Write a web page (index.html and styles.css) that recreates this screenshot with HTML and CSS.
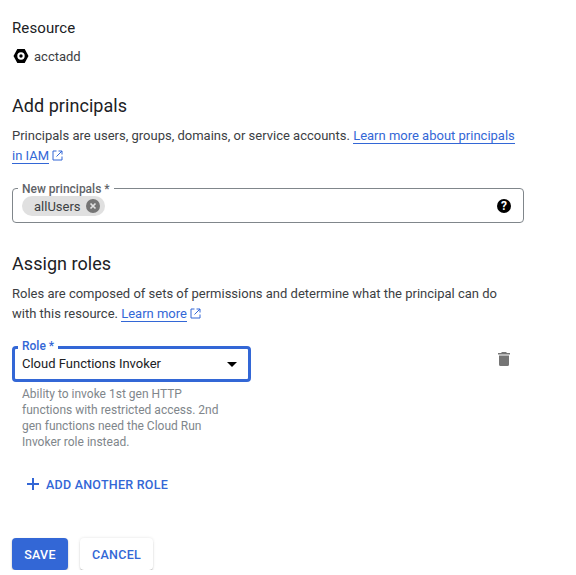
FILE: index.html
```html
<!DOCTYPE html>
<html lang="en">
<head>
    <meta charset="UTF-8">
    <title>Add principals</title>
    <link rel="stylesheet" href="styles.css">
</head>
<body>

<div class="container">
    <h3 class="resource-title">Resource</h3>
    <div class="resource">
        <svg class="resource-icon" width="16" height="16" viewBox="0 0 16 16">
            <path fill-rule="evenodd" d="M4.300 1h7.400L15.500 8l-3.800 7H4.300L0.500 8z M8 4.300a3.700 3.700 0 1 0 0 7.400a3.700 3.700 0 0 0 0-7.400z M8 6.300a1.700 1.700 0 1 1 0 3.400a1.700 1.700 0 0 1 0-3.400z" fill="#000"/>
        </svg>
        <span>acctadd</span>
    </div>

    <h2 class="section-title principals-title">Add principals</h2>
    <p class="desc">Principals are users, groups, domains, or service accounts. <a class="link">Learn more about principals in IAM</a><svg class="ext" width="11" height="11" viewBox="0 0 11 11"><path d="M4.500 1H1v9h9V6.500 M6.500 1H10v3.500 M10 1L4.500 6.500" fill="none" stroke="#3367d6" stroke-width="1"/></svg></p>

    <div class="field principals-field">
        <span class="field-label">New principals *</span>
        <div class="chip">
            <span>allUsers</span>
            <svg width="14" height="14" viewBox="0 0 14 14">
                <circle cx="7" cy="7" r="7" fill="#757575"/>
                <path d="M4.500 4.500l5 5M9.500 4.500l-5 5" stroke="#e0e0e0" stroke-width="1.700"/>
            </svg>
        </div>
        <svg class="help" width="16" height="16" viewBox="0 0 16 16">
            <circle cx="8" cy="8" r="7" fill="#000"/>
            <text x="8" y="12" text-anchor="middle" class="help-mark">?</text>
        </svg>
    </div>

    <h2 class="section-title roles-title">Assign roles</h2>
    <p class="desc">Roles are composed of sets of permissions and determine what the principal can do with this resource. <a class="link">Learn more</a><svg class="ext" width="11" height="11" viewBox="0 0 11 11"><path d="M4.500 1H1v9h9V6.500 M6.500 1H10v3.500 M10 1L4.500 6.500" fill="none" stroke="#3367d6" stroke-width="1"/></svg></p>

    <div class="role-row">
        <div class="role-col">
            <div class="field role-field">
                <span class="field-label role-label">Role *</span>
                <span>Cloud Functions Invoker</span>
                <span class="arrow"></span>
            </div>
            <p class="hint">Ability to invoke 1st gen HTTP functions with restricted access. 2nd gen functions need the Cloud Run Invoker role instead.</p>
        </div>
        <svg class="trash" width="12" height="14" viewBox="0 0 12 14">
            <path d="M4 0h4l1 1h3v1.500H0V1h3z M1 3.500h10v9A1.500 1.500 0 0 1 9.500 14h-7A1.500 1.500 0 0 1 1 12.500z" fill="#757575"/>
        </svg>
    </div>

    <a class="add-role">
        <svg width="14" height="14" viewBox="0 0 14 14"><path d="M7 1v12M1 7h12" stroke="#3367d6" stroke-width="2"/></svg>
        <span>ADD ANOTHER ROLE</span>
    </a>

    <div class="actions">
        <button class="btn-save">SAVE</button>
        <button class="btn-cancel">CANCEL</button>
    </div>
</div>

</body>
</html>
```

FILE: styles.css
```css
body {
    margin: 0;
    font-family: Roboto, sans-serif;
    background-color: #ffffff;
    color: #202124;
}
.container {
    width: 512px;
    padding: 20px 0 0 12px;
}
.resource-title {
    margin: 0;
    font-size: 15px;
    line-height: 16px;
    font-weight: 400;
    letter-spacing: 0.1px;
    color: #202124;
}
.resource {
    display: flex;
    align-items: center;
    gap: 5px;
    margin-top: 12px;
    margin-left: 1px;
    height: 16px;
    font-size: 13px;
    color: #3c4043;
}
.section-title {
    margin: 0;
    font-size: 18px;
    line-height: 24px;
    font-weight: 400;
    letter-spacing: 0.05px;
    color: #202124;
}
.principals-title {
    margin-top: 30px;
}
.roles-title {
    margin-top: 29px;
}
.desc {
    margin: 8px 0 0;
    font-size: 13px;
    line-height: 20px;
    color: #3c4043;
}
.link {
    color: #3367d6;
    border-bottom: 1px solid #3367d6;
}
.ext {
    margin-left: 3px;
    vertical-align: -1px;
}
.field {
    position: relative;
    display: flex;
    align-items: center;
    box-sizing: border-box;
    border: 1px solid #80868b;
    border-radius: 4px;
}
.field-label {
    position: absolute;
    left: 5px;
    top: -7px;
    padding: 0 4px;
    background-color: #ffffff;
    font-size: 12px;
    line-height: 14px;
    font-weight: 500;
    color: #5f6368;
}
.principals-field {
    height: 35px;
    margin-top: 22px;
    padding: 0 11px 0 9px;
    justify-content: space-between;
}
.chip {
    display: flex;
    align-items: center;
    gap: 5px;
    height: 20px;
    margin-top: 1px;
    padding: 0 5px 0 12px;
    border-radius: 10px;
    background-color: #e0e0e0;
    font-size: 13px;
    color: #3c4043;
}
.help-mark {
    font-family: Roboto, sans-serif;
    font-size: 12px;
    font-weight: 700;
    fill: #ffffff;
}
.role-row {
    display: flex;
    justify-content: space-between;
    margin-top: 22px;
}
.role-col {
    width: 239px;
}
.role-field {
    height: 36px;
    padding: 0 11px 2px 7px;
    justify-content: space-between;
    border: 3px solid #3367d6;
    font-size: 13px;
    color: #202124;
}
.role-label {
    left: 3px;
    top: -10px;
    color: #3367d6;
}
.arrow {
    width: 0;
    height: 0;
    margin-top: 2px;
    border-left: 5px solid transparent;
    border-right: 5px solid transparent;
    border-top: 5px solid #000000;
}
.hint {
    width: 205px;
    margin: 4px 0 0 10px;
    font-size: 12px;
    line-height: 16px;
    color: #80868b;
}
.trash {
    margin: 6px 14px 0 0;
}
.add-role {
    display: flex;
    align-items: center;
    gap: 6px;
    margin: 26px 0 0 14px;
    height: 16px;
    font-size: 12.500px;
    font-weight: 500;
    letter-spacing: 0.25px;
    color: #3367d6;
}
.actions {
    display: flex;
    gap: 12px;
    margin-top: 46px;
}
.actions button {
    height: 32px;
    border: none;
    border-radius: 4px;
    font-family: Roboto, sans-serif;
    font-size: 12.500px;
    font-weight: 500;
    letter-spacing: 0.3px;
    padding: 0;
}
.btn-save {
    width: 56px;
    background-color: #3367d6;
    color: #ffffff;
    box-shadow: 0 1px 2px rgba(0,0,0,0.3);
}
.btn-cancel {
    width: 73px;
    background-color: #ffffff;
    color: #3367d6;
    box-shadow: 0 2px 2px -1px rgba(0,0,0,0.45), 0 0 3px rgba(0,0,0,0.12);
}
```
